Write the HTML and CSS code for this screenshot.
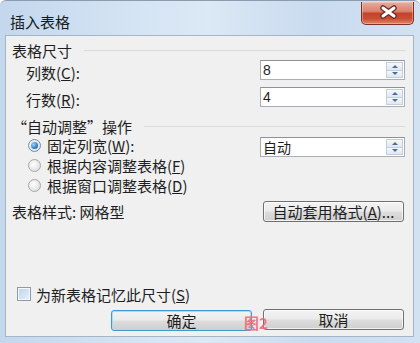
FILE: index.html
```html
<!DOCTYPE html>
<html lang="zh-CN">
<head>
    <meta charset="UTF-8">
    <title>插入表格</title>
    <link rel="stylesheet" href="styles.css">
</head>
<body>
<div class="window">
    <div class="titlebar">
        <span class="title">插入表格</span>
        <div class="close">
            <svg width="53" height="22" viewBox="0 0 53 22">
                <path d="M22 7 L33 15 M33 7 L22 15" stroke="#6b2a22" stroke-width="5.5" stroke-linecap="round"/>
                <path d="M22 7 L33 15 M33 7 L22 15" stroke="#fff" stroke-width="3" stroke-linecap="round"/>
            </svg>
        </div>
    </div>

    <div class="content">
        <div class="group-head"><span>表格尺寸</span><i class="rule"></i></div>

        <div class="row">
            <span class="label">列数(<u>C</u>):</span>
            <div class="spin"><span class="value num">8</span><span class="arrows"><i class="up"></i><i class="down"></i></span></div>
        </div>
        <div class="row second">
            <span class="label">行数(<u>R</u>):</span>
            <div class="spin"><span class="value num">4</span><span class="arrows"><i class="up"></i><i class="down"></i></span></div>
        </div>

        <div class="group-head auto-head"><span>“自动调整”操作</span><i class="rule"></i></div>

        <div class="radio-row">
            <span class="radio-item"><i class="radio checked"></i>固定列宽(<u>W</u>):</span>
            <div class="spin raised"><span class="value">自动</span><span class="arrows"><i class="up"></i><i class="down"></i></span></div>
        </div>
        <div class="radio-row">
            <span class="radio-item"><i class="radio"></i>根据内容调整表格(<u>F</u>)</span>
        </div>
        <div class="radio-row">
            <span class="radio-item"><i class="radio"></i>根据窗口调整表格(<u>D</u>)</span>
        </div>

        <div class="style-row">
            <span>表格样式: 网格型</span>
            <div class="btn">自动套用格式(<u>A</u>)...</div>
        </div>

        <div class="check-row">
            <i class="checkbox"></i><span>为新表格记忆此尺寸(<u>S</u>)</span>
        </div>

        <div class="button-row">
            <div class="btn default">确定</div>
            <div class="btn">取消</div>
            <span class="mark">图2</span>
        </div>
    </div>
</div>
</body>
</html>
```

FILE: styles.css
```css
body {
    margin: 0;
    background: #ffffff;
    font-family: "Noto Sans CJK SC", "Liberation Sans", sans-serif;
    font-size: 15px;
    color: #1e1e1e;
}

.window {
    width: 420px;
    height: 343px;
    box-sizing: border-box;
    padding: 0 6px 6px 5px;
    border-top: 1px solid #8a9cb2;
    border-radius: 6px 6px 0 0;
    background: linear-gradient(to right, #c3d7ed 0%, #d6e5f4 35%, #dbe8f5 50%, #c9dbef 75%, #d2e2f3 100%);
    display: flex;
    flex-direction: column;
}

.titlebar {
    height: 34px;
    display: flex;
    align-items: flex-start;
    flex-shrink: 0;
}
.title {
    font-size: 15px;
    line-height: 18px;
    padding: 12px 0 0 5px;
    color: #1a1a1a;
}
.close {
    margin-left: auto;
    margin-top: 1px;
    width: 53px;
    height: 23px;
    box-sizing: border-box;
    border: 1px solid #7d3026;
    border-top: none;
    border-radius: 0 0 5px 5px;
    background: linear-gradient(#e9ab9b 0%, #dc8370 42%, #c3432c 52%, #c94d33 75%, #df8566 100%);
    box-shadow: inset 0 0 0 1px rgba(255, 255, 255, 0.3);
    overflow: hidden;
}
.close svg {
    display: block;
    margin: -1px 0 0 -1px;
}

.content {
    flex: 1;
    background: #f0f0f0;
    border: 1px solid #a4b5c8;
    padding: 0 8px 0 6px;
    position: relative;
}

.group-head {
    height: 20px;
    margin-top: 4px;
    display: flex;
    align-items: center;
}
.group-head .rule {
    flex: 1;
    height: 1px;
    background: #dadada;
    margin-left: 12px;
}
.auto-head {
    height: 18px;
    margin-top: 10px;
}

.row {
    height: 20px;
    display: flex;
    align-items: center;
    justify-content: space-between;
}
.row.second {
    margin-top: 7px;
}
.label {
    padding-left: 14px;
    margin-top: 5px;
}

.spin {
    width: 145px;
    height: 20px;
    box-sizing: border-box;
    border: 1px solid #abadb3;
    border-top-color: #8e9199;
    background: #ffffff;
    display: flex;
    align-items: center;
}
.spin .value {
    flex: 1;
    padding-left: 2px;
    font-size: 14px;
}
.spin .num {
    font-family: "Liberation Sans", sans-serif;
    font-size: 14px;
}
.arrows {
    width: 17px;
    height: 16px;
    margin-right: 1px;
    display: flex;
    flex-direction: column;
}
.arrows i {
    flex: 1;
    border: 1px solid #c2cfdd;
    background: linear-gradient(#f6f8fb, #dfe7f0);
    display: flex;
    align-items: center;
    justify-content: center;
}
.arrows i::after {
    content: "";
    border-left: 3px solid transparent;
    border-right: 3px solid transparent;
}
.arrows .up::after {
    border-bottom: 3px solid #4e6c96;
}
.arrows .down {
    border-top: none;
}
.arrows .down::after {
    border-top: 3px solid #4e6c96;
}

.radio-row {
    height: 20px;
    display: flex;
    align-items: center;
    justify-content: space-between;
}
.spin.raised {
    align-self: flex-start;
    margin-top: 2px;
}
.radio-item {
    display: flex;
    align-items: center;
    padding-left: 16px;
}
.radio {
    width: 11px;
    height: 11px;
    border-radius: 50%;
    border: 1px solid #a7a7a7;
    background: radial-gradient(circle at 40% 40%, #ffffff 0%, #e6e6e6 60%, #d4d4d4 100%);
    margin-right: 6px;
    position: relative;
}
.radio.checked {
    border-color: #6b8fb5;
}
.radio.checked::after {
    content: "";
    position: absolute;
    left: 2px;
    top: 2px;
    width: 7px;
    height: 7px;
    border-radius: 50%;
    background: radial-gradient(circle at 35% 35%, #9fd3f7 0%, #3a87cf 55%, #1b4f8c 100%);
}

.style-row {
    height: 21px;
    margin-top: 6px;
    display: flex;
    align-items: center;
    justify-content: space-between;
}

.btn {
    width: 141px;
    height: 21px;
    box-sizing: border-box;
    border: 1px solid #707070;
    border-radius: 3px;
    background: linear-gradient(#f3f3f3 0%, #ebebeb 48%, #dddddd 52%, #cfcfcf 100%);
    box-shadow: inset 0 0 0 1px rgba(255, 255, 255, 0.7);
    display: flex;
    align-items: center;
    justify-content: center;
    font-size: 15px;
    margin-right: 1px;
}

.check-row {
    height: 16px;
    margin-top: 64px;
    display: flex;
    align-items: center;
    padding-left: 5px;
}
.checkbox {
    width: 12px;
    height: 12px;
    border: 1px solid #8e9aa8;
    background: linear-gradient(135deg, #bcd4ec, #e8f1fa);
    box-shadow: inset 0 0 0 1px #f4f8fc;
    margin-right: 5px;
}

.button-row {
    margin-top: 7px;
    display: flex;
    justify-content: flex-end;
    gap: 10px;
    position: relative;
}
.btn.default {
    border-color: #3c9bd0;
    box-shadow: inset 0 0 0 1px #a9dcf5;
    margin-top: 1px;
}
.mark {
    position: absolute;
    left: 232px;
    top: 6px;
    font-size: 15px;
    font-weight: bold;
    line-height: 16px;
    color: #ee6670;
    opacity: 0.85;
}
```
